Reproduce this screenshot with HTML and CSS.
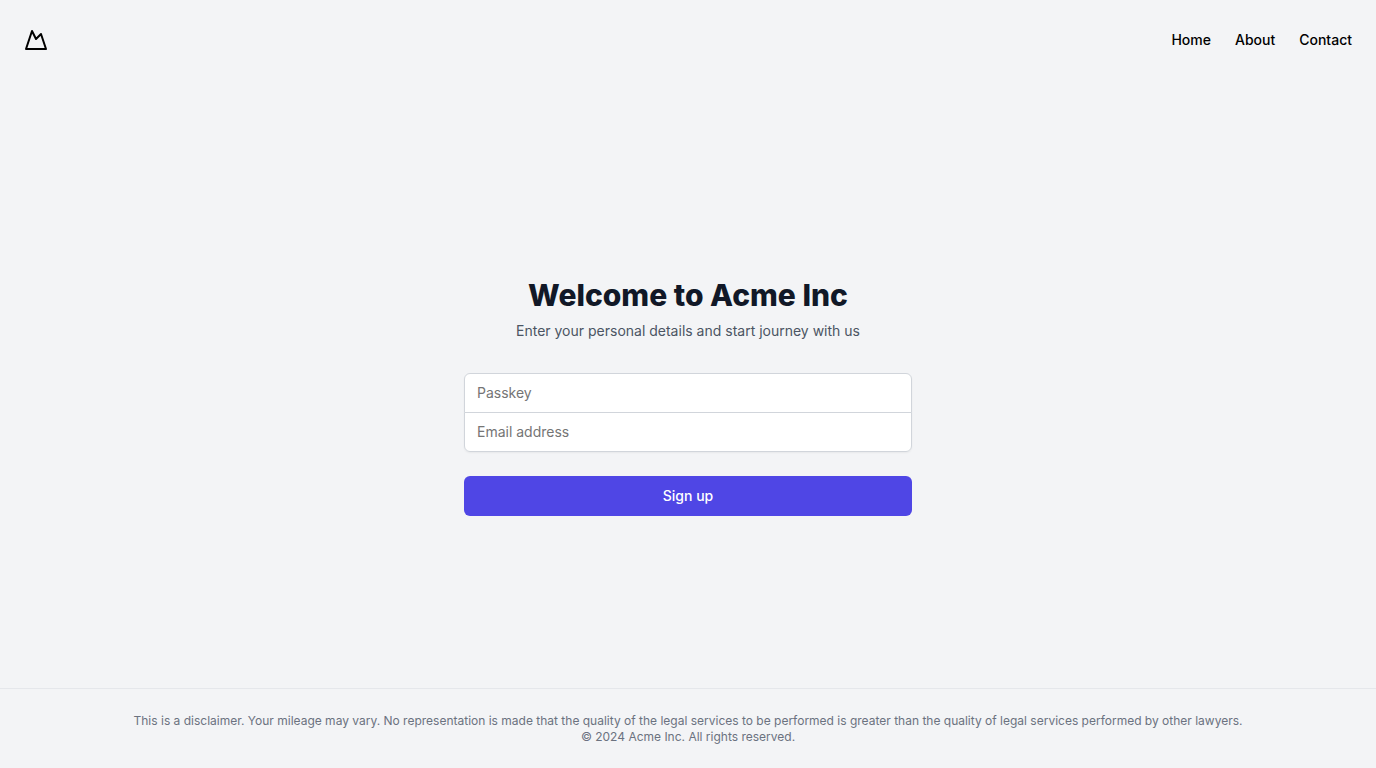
FILE: index.html
```html
<!DOCTYPE html>
<html lang="en">
<head>
<meta charset="utf-8">
<meta name="viewport" content="width=device-width, initial-scale=1">
<title>Acme Inc</title>
<link rel="stylesheet" href="styles.css">
</head>
<body class="page">
  <header class="header">
    <a class="logo" href="#" aria-label="Acme Inc">
      <svg class="logo-icon" viewBox="0 0 24 24" fill="none" stroke="currentColor" stroke-width="2" stroke-linecap="round" stroke-linejoin="round" aria-hidden="true"><path d="m8 3 4 8 5-5 5 15H2L8 3z"/></svg>
    </a>
    <nav class="nav">
      <a class="nav-link" href="#">Home</a>
      <a class="nav-link" href="#">About</a>
      <a class="nav-link" href="#">Contact</a>
    </nav>
  </header>
  <main class="main">
    <div class="panel">
      <div class="intro">
        <h1 class="title">Welcome to Acme Inc</h1>
        <p class="subtitle">Enter your personal details and start journey with us</p>
      </div>
      <form class="form">
        <div class="fields">
          <input class="field" id="passkey" type="password" placeholder="Passkey" aria-label="Passkey">
          <input class="field" id="email" type="email" placeholder="Email address" aria-label="Email address">
        </div>
        <button class="submit" type="submit">Sign up</button>
      </form>
    </div>
  </main>
  <footer class="footer">
    <p class="footer-text">This is a disclaimer. Your mileage may vary. No representation is made that the quality of the legal services to be performed is greater than the quality of legal services performed by other lawyers.</p>
    <p class="footer-text">© 2024 Acme Inc. All rights reserved.</p>
  </footer>
</body>
</html>
```
FILE: styles.css
```css
*, *::before, *::after { box-sizing: border-box; }

.page {
  margin: 0;
  min-height: 100vh;
  display: flex;
  flex-direction: column;
  background: #f3f4f6;
  color: #000;
  font-family: Inter, "Liberation Sans", sans-serif;
  font-size: 14px;
  line-height: 20px;
}

.header {
  display: flex;
  align-items: center;
  justify-content: space-between;
  padding: 28px 24px;
}

.logo { display: flex; color: #000; }
.logo-icon { width: 24px; height: 24px; }

.nav { display: flex; gap: 24px; }
.nav-link { color: #000; font-weight: 500; text-decoration: none; }
.nav-link:hover { text-decoration: underline; }

.main {
  flex: 1;
  display: flex;
  align-items: center;
  justify-content: center;
  padding: 73px 32px 48px;
}

.panel {
  width: 100%;
  max-width: 448px;
  display: flex;
  flex-direction: column;
  gap: 32px;
}

.intro { text-align: center; }

.title {
  margin: 0;
  color: #111827;
  font-size: 30px;
  line-height: 36px;
  font-weight: 800;
}

.subtitle { margin: 8px 0 0; color: #4b5563; }

.form { display: flex; flex-direction: column; gap: 24px; }

.fields {
  display: flex;
  flex-direction: column;
  border-radius: 6px;
  box-shadow: 0 1px 2px rgba(0, 0, 0, 0.05);
}

.field {
  width: 100%;
  margin: 0;
  padding: 9px 12px;
  border: 1px solid #d1d5db;
  border-radius: 6px 6px 0 0;
  background: #fff;
  color: #111827;
  font: inherit;
}

.field + .field {
  margin-top: -1px;
  border-radius: 0 0 6px 6px;
}

.field::placeholder { color: #757575; opacity: 1; }

.submit {
  width: 100%;
  padding: 10px 16px;
  border: 0;
  border-radius: 6px;
  background: #4f46e5;
  color: #fff;
  font: inherit;
  font-weight: 500;
  cursor: pointer;
}
.submit:hover { background: #4338ca; }

.footer {
  padding: 24px 24px 23px;
  border-top: 1px solid #e5e7eb;
  text-align: center;
}

.footer-text {
  margin: 0;
  color: #6b7280;
  font-size: 12px;
  line-height: 16px;
}
```
